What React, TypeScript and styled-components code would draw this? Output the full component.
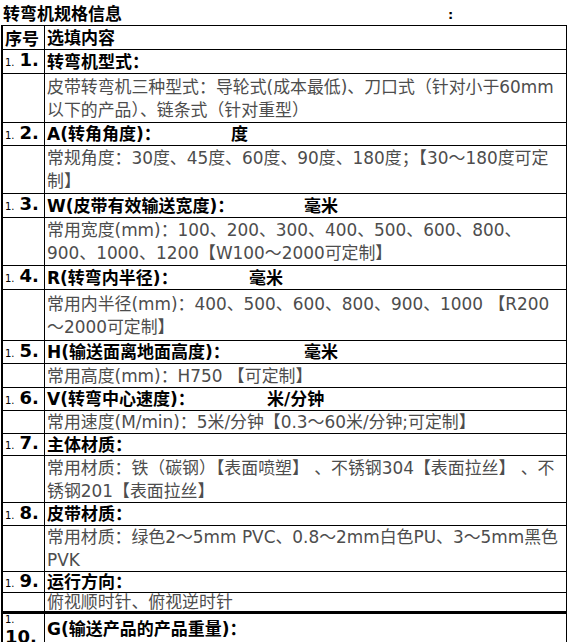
import React from 'react';
import styled, { createGlobalStyle } from 'styled-components';

const GlobalStyle = createGlobalStyle`
  body {
    margin: 0;
    background: #fff;
    font-family: "DejaVu Sans", "Noto Sans CJK SC", sans-serif;
    color: #000;
  }
`;

const Page = styled.div`
  width: 567px;
  height: 642px;
  overflow: hidden;
`;

const TitleBar = styled.div`
  display: flex;
  align-items: center;
  height: 25px;
  padding-left: 3px;
  font-size: 17px;
  font-weight: bold;
`;

const Colon = styled.span`
  margin-left: 326px;
  font-size: 13px;
  padding-top: 4px;
`;

const Table = styled.div`
  margin-left: 1px;
  width: 563px;
  border-top: 1px solid #000;
  border-left: 2px solid #000;
  border-right: 1px solid #000;
`;

const Row = styled.div<{ $h: number; $thick?: boolean }>`
  display: flex;
  box-sizing: border-box;
  height: ${(p) => p.$h}px;
  border-bottom: ${(p) => (p.$thick ? 3 : 1)}px solid #000;
`;

const NumCell = styled.div`
  flex: 0 0 42px;
  box-sizing: border-box;
  border-right: 1px solid #000;
  display: flex;
  align-items: center;
  padding-left: 2px;
  white-space: nowrap;
`;

const NumLine = styled.span`
  line-height: 22px;
`;

const StackNum = styled(NumCell)`
  flex-direction: column;
  align-items: flex-start;
  justify-content: flex-start;
  overflow: hidden;
`;

const Small = styled.span<{ $block?: boolean }>`
  font-size: 10px;
  margin-right: 5px;
  display: ${(p) => (p.$block ? 'block' : 'inline')};
  line-height: ${(p) => (p.$block ? '12px' : 'inherit')};
`;

const Big = styled.span<{ $block?: boolean }>`
  font-size: 18px;
  font-weight: bold;
  display: ${(p) => (p.$block ? 'block' : 'inline')};
  line-height: ${(p) => (p.$block ? '17px' : 'inherit')};
  margin-top: ${(p) => (p.$block ? '2px' : '0')};
`;

const Cell = styled.div<{ $bold?: boolean }>`
  flex: 1;
  display: flex;
  flex-direction: column;
  justify-content: center;
  padding-left: 2px;
  padding-top: 1px;
  white-space: nowrap;
  font-size: ${(p) => (p.$bold ? 17 : 16.9)}px;
  font-weight: ${(p) => (p.$bold ? 'bold' : 'normal')};
  color: ${(p) => (p.$bold ? '#000' : '#4d4d4d')};
  line-height: 23px;
`;

const HeadText = styled.span`
  font-size: 17px;
  font-weight: bold;
`;

const Line = styled.div``;

const Label = styled.span<{ $w?: number }>`
  display: inline-block;
  min-width: ${(p) => p.$w ?? 0}px;
`;

type Item = {
  n: string;
  title: string;
  unit?: string;
  unitAt?: number;
  hh: number;
  lines?: string[];
  ch?: number;
};

const items: Item[] = [
  {
    n: '1.',
    title: '转弯机型式：',
    hh: 24,
    lines: ['皮带转弯机三种型式：导轮式(成本最低)、刀口式（针对小于60mm', '以下的产品）、链条式（针对重型）'],
    ch: 49,
  },
  {
    n: '2.',
    title: 'A(转角角度)：',
    unit: '度',
    unitAt: 184,
    hh: 23,
    lines: ['常规角度：30度、45度、60度、90度、180度；【30～180度可定', '制】'],
    ch: 48,
  },
  {
    n: '3.',
    title: 'W(皮带有效输送宽度)：',
    unit: '毫米',
    unitAt: 257,
    hh: 24,
    lines: ['常用宽度(mm)：100、200、300、400、500、600、800、', '900、1000、1200【W100～2000可定制】'],
    ch: 48,
  },
  {
    n: '4.',
    title: 'R(转弯内半径)：',
    unit: '毫米',
    unitAt: 202,
    hh: 24,
    lines: ['常用内半径(mm)：400、500、600、800、900、1000 【R200', '～2000可定制】'],
    ch: 51,
  },
  {
    n: '5.',
    title: 'H(输送面离地面高度)：',
    unit: '毫米',
    unitAt: 257,
    hh: 23,
    lines: ['常用高度(mm)：H750 【可定制】'],
    ch: 24,
  },
  {
    n: '6.',
    title: 'V(转弯中心速度)：',
    unit: '米/分钟',
    unitAt: 220,
    hh: 23,
    lines: ['常用速度(M/min)：5米/分钟【0.3～60米/分钟;可定制】'],
    ch: 23,
  },
  {
    n: '7.',
    title: '主体材质：',
    hh: 22,
    lines: ['常用材质：铁（碳钢）【表面喷塑】 、不锈钢304【表面拉丝】 、不', '锈钢201【表面拉丝】'],
    ch: 47,
  },
  {
    n: '8.',
    title: '皮带材质：',
    hh: 23,
    lines: ['常用材质：绿色2～5mm PVC、0.8～2mm白色PU、3～5mm黑色', 'PVK'],
    ch: 46,
  },
  {
    n: '9.',
    title: '运行方向：',
    hh: 21,
    lines: ['俯视顺时针、俯视逆时针'],
    ch: 21,
  },
];

const App: React.FC = () => {
  return (
    <Page>
      <GlobalStyle />
      <TitleBar>
        <span>转弯机规格信息</span>
        <Colon>:</Colon>
      </TitleBar>
      <Table>
        <Row $h={24}>
          <NumCell>
            <HeadText>序号</HeadText>
          </NumCell>
          <Cell $bold>选填内容</Cell>
        </Row>
        {items.map((it, i) => (
          <React.Fragment key={it.n}>
            <Row $h={it.hh}>
              <NumCell>
                <NumLine>
                  <Small>1.</Small>
                  <Big>{it.n}</Big>
                </NumLine>
              </NumCell>
              <Cell $bold>
                <Line>
                  <Label $w={it.unitAt}>{it.title}</Label>
                  {it.unit}
                </Line>
              </Cell>
            </Row>
            {it.lines && (
              <Row $h={it.ch ?? 24} $thick={i === items.length - 1}>
                <NumCell />
                <Cell>
                  {it.lines.map((l) => (
                    <Line key={l}>{l}</Line>
                  ))}
                </Cell>
              </Row>
            )}
          </React.Fragment>
        ))}
        <Row $h={30}>
          <StackNum>
            <Small $block>1.</Small>
            <Big $block>10.</Big>
          </StackNum>
          <Cell $bold>G(输送产品的产品重量)：</Cell>
        </Row>
      </Table>
    </Page>
  );
};

export default App;
